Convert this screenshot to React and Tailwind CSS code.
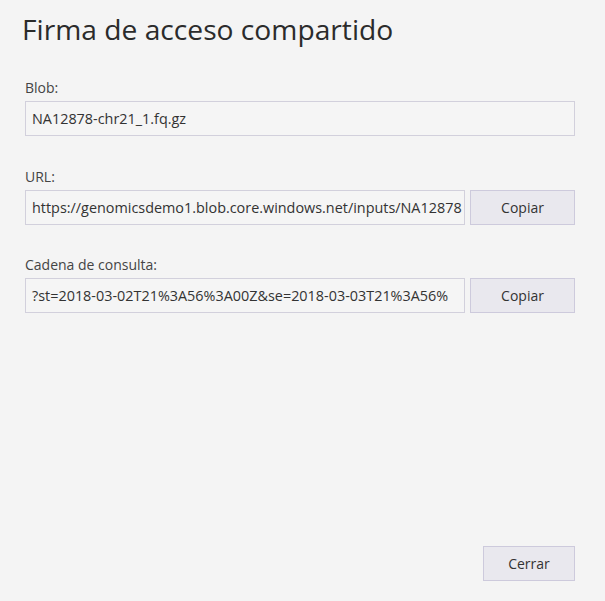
import React from 'react';

const font = { fontFamily: '"Open Sans", "Noto Sans", sans-serif' };

function Field({ label, value, withCopy, className = '' }) {
  return (
    <div className={`flex flex-col ${className}`}>
      <label className="text-[14px] leading-[19px] text-[#444] mb-[4px]">{label}</label>
      <div className="flex gap-[5px]">
        <div className="flex-1 min-w-0 h-[35px] border border-[#d2d0dc] bg-[#f5f5f5] px-[6px] flex items-center overflow-hidden">
          <span className="text-[14.4px] text-[#333] whitespace-nowrap">{value}</span>
        </div>
        {withCopy && (
          <button className="w-[105px] h-[35px] border border-[#cdcadc] bg-[#e9e8ee] text-[14px] text-[#333]">
            Copiar
          </button>
        )}
      </div>
    </div>
  );
}

export default function App() {
  return (
    <div className="w-[605px] h-[601px] bg-[#f4f4f4] flex flex-col" style={font}>
      <h1 className="text-[28.2px] leading-[34px] text-[#2b2b2b] font-normal pl-[22px] pt-[12px]">
        Firma de acceso compartido
      </h1>
      <div className="flex flex-col pl-[25px] pr-[30px] mt-[32px]">
        <Field label="Blob:" value="NA12878-chr21_1.fq.gz" />
        <Field className="mt-[31px]" label="URL:" value="https://genomicsdemo1.blob.core.windows.net/inputs/NA12878" withCopy />
        <Field className="mt-[30px]" label="Cadena de consulta:" value="?st=2018-03-02T21%3A56%3A00Z&se=2018-03-03T21%3A56%" withCopy />
      </div>
      <div className="mt-auto flex justify-end pr-[30px] pb-[20px]">
        <button className="w-[92px] h-[35px] border border-[#cdcadc] bg-[#e9e8ee] text-[14px] text-[#333]">
          Cerrar
        </button>
      </div>
    </div>
  );
}
